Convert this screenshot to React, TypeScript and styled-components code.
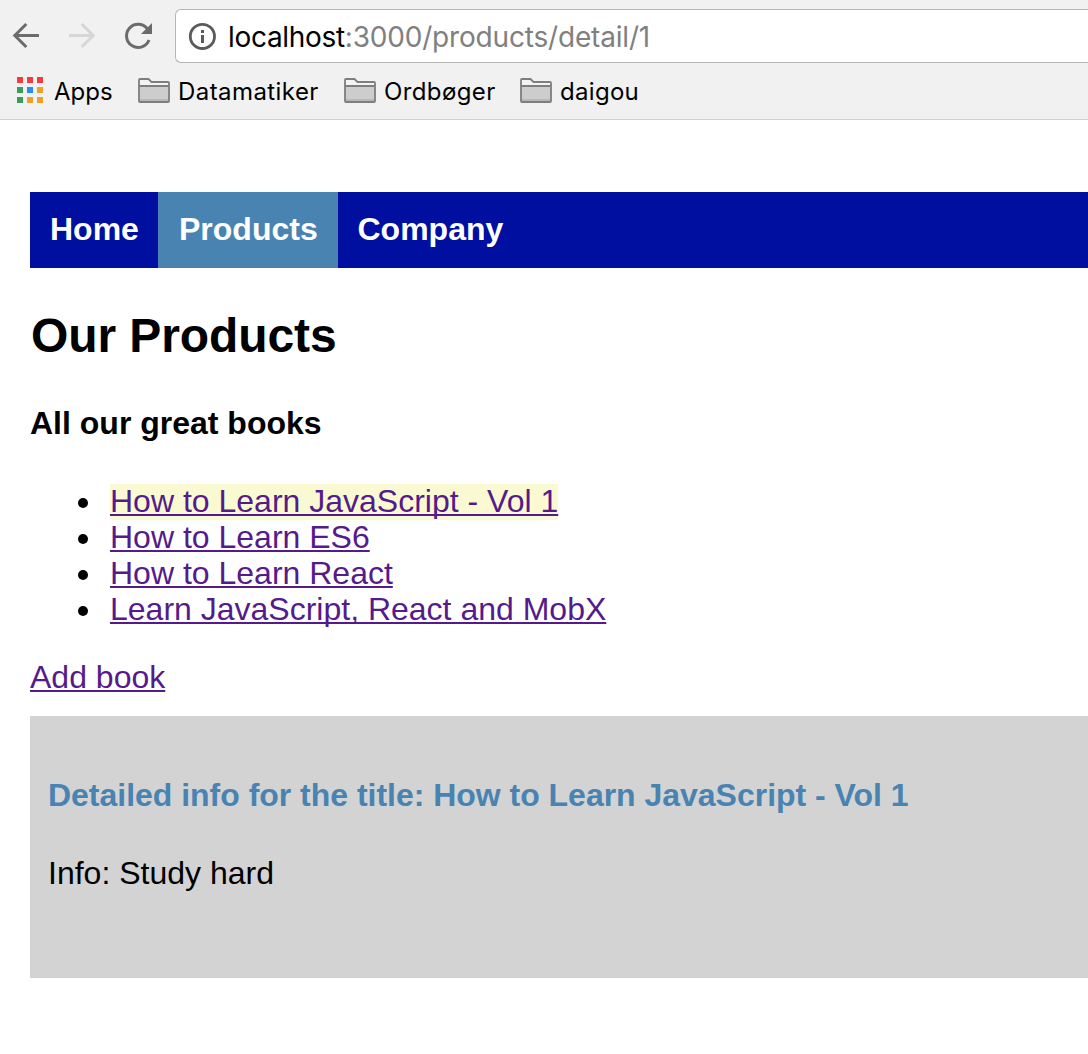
import React from "react";
import styled, { createGlobalStyle } from "styled-components";

const Global = createGlobalStyle`
  * { box-sizing: border-box; }
  body { margin: 0; background: #fff; color: #000; overflow: hidden; font: 32px/36px "Liberation Sans", Arial, sans-serif; }
`;
const Chrome = styled.header`
  height: 120px; background: #f1f1f1; border-bottom: 1px solid #d0d0d0; font-family: Inter, Roboto, sans-serif;
`;
const Toolbar = styled.div`
  display: flex; height: 63px; padding-top: 9px;
`;
const NavIcons = styled.div`
  display: flex; width: 175px; gap: 26px; padding: 12px 0 0 11px;
`;
const Icon = styled.svg`display: block; flex: none;`;
const Address = styled.div`
  flex: 1; height: 54px; display: flex; align-items: center; padding-left: 12px; gap: 12px;
  background: #fff; border: 1px solid #b5b5b5; border-right: 0; border-radius: 6px 0 0 6px;
`;
const Url = styled.div`
  padding-top: 2px; font-size: 28px; line-height: 40px; letter-spacing: -0.18px; color: #808080; white-space: nowrap;
`;
const Host = styled.span`color: #000; letter-spacing: -0.32px;`;
const Bookmarks = styled.div`
  display: flex; height: 56px; align-items: center; padding-left: 17px;
`;
const Bookmark = styled.div<{ $width: number; $gap?: number }>`
  display: flex; align-items: center; gap: ${p => p.$gap ?? 8}px; width: ${p => p.$width}px;
`;
const Label = styled.span<{ $tracking?: number }>`
  padding-top: 2px; font-size: 24px; line-height: 34px; letter-spacing: ${p => p.$tracking ?? 0}px; white-space: nowrap;
`;
const Page = styled.main`padding: 72px 0 0 30px;`;
const Menu = styled.nav`display: flex; height: 76px; background: #000f9f;`;
const MenuItem = styled.a<{ $width?: number; $inset?: number; $active?: boolean }>`
  width: ${p => p.$width ? `${p.$width}px` : "auto"}; padding: 19px 0 0 ${p => p.$inset ?? 20}px; white-space: nowrap;
  color: #fff; font-weight: 700; background: ${p => p.$active ? "#4983b2" : "transparent"};
`;
const Title = styled.h1`margin: 41px 0 0 1px; font-size: 48px; line-height: 54px; letter-spacing: -0.1px;`;
const Sub = styled.h2`margin: 42px 0 0; font-size: 32px; line-height: 36px;`;
const List = styled.ul`margin: 43px 0 0; padding: 0 0 0 48px; list-style: none;`;
const Item = styled.li`
  display: flex; height: 36px;
  &::before { content: ""; width: 10px; height: 10px; margin: 14px 22px 0 0; border-radius: 50%; background: #000; }
`;
const Link = styled.a<{ $hot?: boolean }>`
  display: inline-block; height: 36px; line-height: 34px; color: #551a8b;
  text-decoration: underline; text-decoration-thickness: 2px; text-underline-offset: 2px; text-decoration-skip-ink: none;
  background: ${p => p.$hot ? "#fafad2" : "transparent"};
`;
const Add = styled.div`display: flex; margin-top: 32px;`;
const Detail = styled.section`margin-top: 20px; height: 262px; padding: 61px 18px 0; background: #d3d3d3;`;
const DetailTitle = styled.h3`margin: 0 0 42px; color: #4983b2; font-size: 32px; line-height: 36px; letter-spacing: -0.02px;`;

const Arrow = ({ forward = false }: { forward?: boolean }) => (
  <Icon width="30" height="30" viewBox="0 0 30 30" fill="none" stroke={forward ? "#d6d6d6" : "#6b6b6b"} strokeWidth="3">
    <path d={forward ? "M2 14.5H27M14.7 3L26.2 14.5L14.7 26" : "M28 14.5H3M15.3 3L3.8 14.5L15.3 26"} />
  </Icon>
);
const Reload = () => (
  <Icon width="30" height="30" viewBox="0 0 30 30">
    <path d="M24.2 7.6A11.6 11.6 0 1 0 26 19" fill="none" stroke="#6b6b6b" strokeWidth="3" />
    <path d="M29 2V13H18Z" fill="#6b6b6b" />
  </Icon>
);
const Info = () => (
  <Icon width="28" height="28" viewBox="0 0 28 28">
    <circle cx="14.4" cy="14.4" r="12.1" fill="none" stroke="#5a5a5a" strokeWidth="2.8" />
    <path d="M13 8h3v3h-3zM13 13h3v8h-3z" fill="#5a5a5a" />
  </Icon>
);
const dots = ["#f53b3b", "#f53b3b", "#f53b3b", "#3a9d59", "#268cf6", "#f0a028", "#3a9d59", "#f0a028", "#f0a028"];
const AppsIcon = () => (
  <Icon width="26" height="28" viewBox="0 0 26 28">
    {dots.map((c, i) => <rect key={i} x={(i % 3) * 10} y={Math.floor(i / 3) * 10} width="6" height="6" fill={c} />)}
  </Icon>
);
const Folder = () => (
  <Icon width="32" height="28" viewBox="0 0 32 28">
    <path d="M1 24V3Q1 2 2 2H10.5L13.5 5H30Q31 5 31 6V24Z" fill="#f3f3f3" />
    <path d="M1 9H31V24H1Z" fill="#cdcdcd" />
    <path d="M1 22H31V24H1Z" fill="#b9b9b9" />
    <path d="M1 24V3Q1 2 2 2H10.5L13.5 5H30Q31 5 31 6V24Q31 25 30 25H2Q1 25 1 24ZM1 9H31" fill="none" stroke="#7e7e7e" strokeWidth="1.8" />
  </Icon>
);

export default function App() {
  return (
    <>
      <Global />
      <Chrome>
        <Toolbar>
          <NavIcons><Arrow /><Arrow forward /><Reload /></NavIcons>
          <Address><Info /><Url><Host>localhost</Host>:3000/products/detail/1</Url></Address>
        </Toolbar>
        <Bookmarks>
          <Bookmark $width={121} $gap={11}><AppsIcon /><Label>Apps</Label></Bookmark>
          <Bookmark $width={206}><Folder /><Label $tracking={0.43}>Datamatiker</Label></Bookmark>
          <Bookmark $width={176}><Folder /><Label $tracking={0.38}>Ordbøger</Label></Bookmark>
          <Bookmark $width={130}><Folder /><Label $tracking={0.3}>daigou</Label></Bookmark>
        </Bookmarks>
      </Chrome>
      <Page>
        <Menu>
          <MenuItem $width={128}>Home</MenuItem>
          <MenuItem $width={180} $inset={21} $active>Products</MenuItem>
          <MenuItem $inset={19.5}>Company</MenuItem>
        </Menu>
        <Title>Our Products</Title>
        <Sub>All our great books</Sub>
        <List>
          <Item><Link $hot>How to Learn JavaScript - Vol 1</Link></Item>
          <Item><Link>How to Learn ES6</Link></Item>
          <Item><Link>How to Learn React</Link></Item>
          <Item><Link>Learn JavaScript, React and MobX</Link></Item>
        </List>
        <Add><Link>Add book</Link></Add>
        <Detail>
          <DetailTitle>Detailed info for the title: How to Learn JavaScript - Vol 1</DetailTitle>
          Info: Study hard
        </Detail>
      </Page>
    </>
  );
}
